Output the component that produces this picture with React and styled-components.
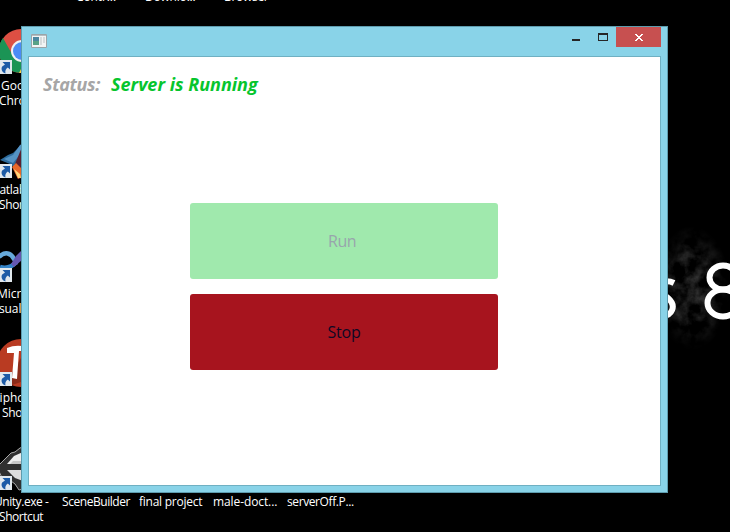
import React from 'react';
import styled, { createGlobalStyle } from 'styled-components';

const Global = createGlobalStyle`
  * { box-sizing: border-box; }
  html, body { margin: 0; background: #000; overflow: hidden; }
`;

const Desktop = styled.main`
  position: relative;
  width: 730px;
  height: 532px;
  overflow: hidden;
  background: #000;
  font-family: "Open Sans", "Noto Sans", sans-serif;
`;

const Wallpaper = styled.svg`
  position: absolute;
  left: 660px;
  top: 220px;
  width: 70px;
  height: 170px;
`;

const Shortcut = styled.div`
  position: absolute;
  left: 0;
  top: ${p => p.$y}px;
  width: 48px;
`;

const IconArt = styled.svg`
  display: block;
  width: 48px;
  height: 48px;
  overflow: visible;
`;

const Label = styled.div`
  position: absolute;
  left: ${p => p.$x}px;
  top: ${p => p.$y}px;
  height: 15px;
  font-size: 12px;
  line-height: 15px;
  letter-spacing: ${p => p.$track || 0}px;
  color: #fff;
  white-space: nowrap;
`;

const Window = styled.section`
  position: absolute;
  left: 21px;
  top: 26px;
  width: 647px;
  height: 467px;
  display: flex;
  flex-direction: column;
  padding: 0 6px 6px;
  background: #89d3e8;
  border: 1px solid #5e9cae;
`;

const TitleBar = styled.header`
  flex: none;
  height: 29px;
  display: flex;
  align-items: flex-start;
  justify-content: space-between;
`;

const AppIcon = styled.svg`
  width: 16px;
  height: 14px;
  margin: 7px 0 0 3px;
`;

const Controls = styled.div`
  display: flex;
`;

const ControlButton = styled.button`
  width: ${p => p.$width}px;
  height: 20px;
  padding: 0;
  border: 0;
  background: ${p => (p.$close ? '#c75050' : 'transparent')};
  svg { display: block; }
`;

const Client = styled.div`
  flex: 1;
  display: flex;
  flex-direction: column;
  background: #fff;
  border: 1px solid #6fb0c2;
`;

const StatusRow = styled.div`
  display: flex;
  gap: 10px;
  height: 26px;
  margin: 14px 0 0 14px;
  font-size: 18px;
  line-height: 26px;
  font-weight: 700;
  font-style: italic;
  white-space: nowrap;
`;

const StatusText = styled.span`
  width: ${p => p.$width}px;
  color: ${p => p.$color};
  letter-spacing: ${p => p.$track}px;
`;

const Actions = styled.div`
  display: flex;
  flex-direction: column;
  gap: 15px;
  margin: 106px 0 0 161px;
`;

const ActionButton = styled.button`
  width: 308px;
  height: 76px;
  padding: 0 ${p => p.$nudge}px 1px 0;
  border: 0;
  border-radius: 3px;
  background: ${p => p.$bg};
  color: ${p => p.$fg};
  font: 400 16px/22px "Open Sans", "Noto Sans", sans-serif;
  letter-spacing: ${p => p.$track}px;
`;

const ShortcutArrow = () => (
  <g>
    <path d="M0 31h12v14H0z" fill="#e1e8ed" />
    <path d="M2.5 33h7.5v7.5L7.8 38.4C5.5 40 5 42 5.5 44.5 2.5 43.500 .5 40.500 2.200 37.500L5 35.600z" fill="#1d5ba6" />
  </g>
);

const shortcuts = [
  {
    y: 29,
    art: (
      <>
        <circle cx="21" cy="22" r="22" fill="#dd4f43" />
        <path d="M3 9 12 25 21 33V44A22 22 0 0 1 3 9z" fill="#1b9455" />
        <path d="m19 44 2-4v4z" fill="#ffcd46" />
        <circle cx="22" cy="22" r="11" fill="#f1f1f1" />
        <circle cx="22" cy="22" r="9" fill="#4c8bf5" />
      </>
    ),
    lines: [[1, 'Google'], [-1, 'Chrome', -0.1]],
  },
  {
    y: 133,
    art: (
      <>
        <path d="M0 27 8 22 13 20 22 11V38L15 35 10 31z" fill="#2d6b9c" />
        <path d="m4 26 9-4 7-10 2-1v8l-9 11z" fill="#5593c4" />
        <path d="m15 31 7-17v31l-4 1-5-12z" fill="#5a2030" />
        <path d="m12 34 4-4 5 5v9l-3 2z" fill="#e8682a" />
        <path d="m14 36 4 9 3 0-1-4z" fill="#ffd477" />
      </>
    ),
    lines: [[-11, 'Matlab -', -0.3], [-1, 'Shortcut', -0.35]],
  },
  {
    y: 237,
    art: (
      <>
        <path d="M-1 20C5 14 11 16 14 22c1 2 2 3 4 4" fill="none" stroke="#66a9da" strokeWidth="4.5" />
        <path d="M0 30c7 2 12 0 16-5" fill="none" stroke="#3584c7" strokeWidth="4.5" />
        <path d="m11 27 5-8 6-6v10l-8 7z" fill="#6558b1" />
      </>
    ),
    lines: [[-3, 'Microsoft'], [-11, 'Visual', -0.1]],
  },
  {
    y: 341,
    art: (
      <>
        <circle cx="21" cy="22" r="24" fill="#b93b22" />
        <path d="m12 31 9-14v24l-9 3z" fill="#8b2b19" />
        <path d="M7 7q7-3 15-2v5l-3 0-2 28-5-1 2-25-7 0z" fill="#fff" />
      </>
    ),
    lines: [[-7, 'Tiphone'], [2, 'Shortcut', -0.35]],
  },
  {
    y: 445,
    art: (
      <>
        <path d="m-3 22 14-14 4-1 5-4 3-1v42l-4 1-4-6-4-3-8-1z" fill="#303030" stroke="#aaa" strokeWidth="1" />
        <path d="m7 19 7-8 9-4v12z" fill="#eee" />
        <path d="M7 25h16v11l-8-3z" fill="#ddd" />
        <path d="M13 16h10v3H10z" fill="#c7c7c7" />
      </>
    ),
    lines: [[-6, 'Unity.exe -', -0.45], [-1, 'Shortcut', -0.45]],
  },
];

const labels = [
  [76, -11, 'Contr...', -0.1],
  [145, -11, 'Downlo...', -0.2],
  [224, -11, 'Browser', -0.3],
  [62, 494, 'SceneBuilder', -0.45],
  [139, 494, 'final project', -0.25],
  [213, 494, 'male-doct...', -0.1],
  [287, 494, 'serverOff.P...', -0.4],
];

export default function App() {
  return (
    <>
      <Global />
      <Desktop>
        <Wallpaper viewBox="0 0 70 170">
          <defs>
            <filter id="smoke" x="0" y="0" width="100%" height="100%" colorInterpolationFilters="sRGB">
              <feTurbulence type="fractalNoise" baseFrequency=".07" numOctaves="4" seed="8" />
              <feColorMatrix values="0 0 0 0 .22  0 0 0 0 .22  0 0 0 0 .22  2.4 0 0 0 -.85" />
            </filter>
            <radialGradient id="fade">
              <stop offset="0" stopColor="#fff" />
              <stop offset=".55" stopColor="#bbb" />
              <stop offset="1" stopColor="#000" />
            </radialGradient>
            <mask id="cloud">
              <ellipse cx="32" cy="68" rx="38" ry="62" fill="url(#fade)" />
            </mask>
          </defs>
          <rect width="70" height="170" filter="url(#smoke)" mask="url(#cloud)" />
          <path d="M14 63Q8 60 2 62C-5 68 3 74 8 78C17 86 12 96 2 96L-3 94" fill="none" stroke="#fff" strokeWidth="6" />
          <ellipse cx="63" cy="57.500" rx="13.500" ry="12" fill="none" stroke="#fff" strokeWidth="6" />
          <ellipse cx="63" cy="83" rx="15.500" ry="13.500" fill="none" stroke="#fff" strokeWidth="6" />
        </Wallpaper>

        {shortcuts.map(s => (
          <Shortcut key={s.y} $y={s.y}>
            <IconArt viewBox="0 0 48 48">
              {s.art}
              <ShortcutArrow />
            </IconArt>
            {s.lines.map(([x, text, track], i) => (
              <Label key={text} $x={x} $y={49 + i * 15} $track={track}>{text}</Label>
            ))}
          </Shortcut>
        ))}
        {labels.map(([x, y, text, track]) => (
          <Label key={text} $x={x} $y={y} $track={track}>{text}</Label>
        ))}

        <Window>
          <TitleBar>
            <AppIcon viewBox="0 0 16 14">
              <path d="M.5.5h15v13H.5z" fill="#f2f4f4" stroke="#9aa4a8" />
              <path d="M1 1h14v1H1z" fill="#b5bdc0" />
              <path d="M2 3h6v8H2z" fill="#4b87a0" />
              <path d="M2 7h6v4H2z" fill="#58a287" />
              <path d="M9 3h2v8H9zM12 3h2v6h-2z" fill="#d6dbdc" />
            </AppIcon>
            <Controls>
              <ControlButton $width={26} aria-label="Minimize">
                <svg width="26" height="20"><path d="M8 12h8v2H8z" fill="#262626" /></svg>
              </ControlButton>
              <ControlButton $width={26} aria-label="Maximize">
                <svg width="26" height="20" shapeRendering="crispEdges"><path fillRule="evenodd" d="M8 6h10v8H8zM9 8v5h8V8z" fill="#262626" /></svg>
              </ControlButton>
              <ControlButton $width={45} $close aria-label="Close">
                <svg width="45" height="20" shapeRendering="crispEdges"><path d="M19 7h2v1h1v1h2V8h1V7h2v1h-1v1h-1v1h-1v1h1v1h1v1h1v1h-2v-1h-1v-1h-2v1h-1v1h-2v-1h1v-1h1v-1h1v-1h-1V9h-1V8h-1z" fill="#fff" /></svg>
              </ControlButton>
            </Controls>
          </TitleBar>
          <Client>
            <StatusRow>
              <StatusText $width={58} $color="#a6a6a6" $track={-0.35}>Status:</StatusText>
              <StatusText $width={150} $color="#06c52d" $track={0}>Server is Running</StatusText>
            </StatusRow>
            <Actions>
              <ActionButton $bg="#a0e9ad" $fg="#98a5ac" $track={-0.5} $nudge={4} disabled>Run</ActionButton>
              <ActionButton $bg="#a7141e" $fg="#0d0824" $track={-0.2} $nudge={0}>Stop</ActionButton>
            </Actions>
          </Client>
        </Window>
      </Desktop>
    </>
  );
}
